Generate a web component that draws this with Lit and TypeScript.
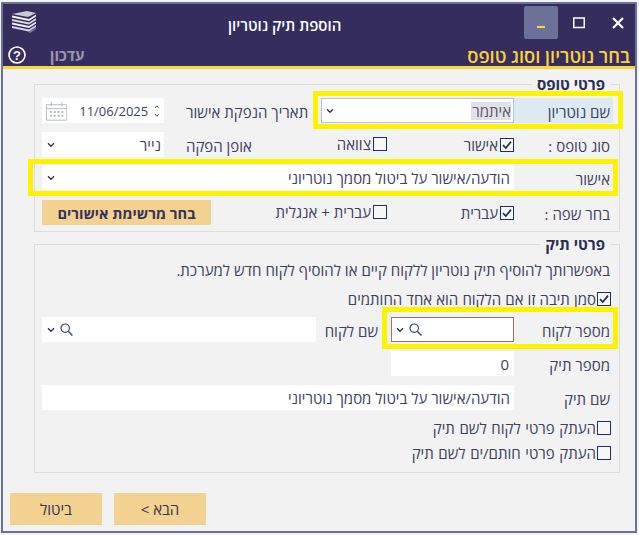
import { LitElement, html, css } from "lit";
import { customElement } from "lit/decorators.js";

const chev = html`<svg class="chev" width="8" height="6" viewBox="0 0 8 6"><path d="M1 1.2 L4 4.2 L7 1.2" fill="none" stroke="#2c3160" stroke-width="1.4"/></svg>`;
const mag = html`<svg class="mag" width="13" height="13" viewBox="0 0 13 13"><circle cx="5.2" cy="5.2" r="4.2" fill="none" stroke="#2f4a78" stroke-width="1.2"/><path d="M8.2 8.2 L12.4 12.4" stroke="#2f4a78" stroke-width="1.4"/></svg>`;

function cb(label: string, checked = false) {
  return html`<label class="cb"><span class="box">${checked
    ? html`<svg width="12" height="12" viewBox="0 0 12 12"><path d="M2 6.2 L4.8 9 L10 2.6" fill="none" stroke="#1f2f5f" stroke-width="1.7"/></svg>`
    : ""}</span><span>${label}</span></label>`;
}

@customElement("app-root")
export class AppRoot extends LitElement {
  static styles = css`
    :host { display: block; width: 639px; height: 535px; background: #f4f4f4; position: relative; overflow: hidden;
      font-family: "Open Sans", "Noto Sans", sans-serif; font-size: 15px; color: #3c3f60; }
    * { box-sizing: border-box; }
    .win { height: 531px; margin: 2px 2px 0 1px; border: 2px solid #6b7199; background: #f2f2f2; display: flex; flex-direction: column; }
    .head { height: 65px; flex: none; background: #352d5e; border-bottom: 3px solid #fdd23f; }
    .toprow { height: 40px; display: flex; align-items: flex-start; }
    .logo { margin: 7px 0 0 9px; flex: none; }
    .title { color: #fff; font-size: 15px; font-weight: 600; margin: 10px 0 0 192px; direction: rtl; line-height: 22px; }
    .ctrls { margin: 2px 0 0 auto; display: flex; }
    .ctrl { height: 33px; display: flex; align-items: center; justify-content: center; }
    .ctrl.min { width: 34px; background: #6b7199; border-radius: 2px; }
    .ctrl.max { width: 42px; }
    .ctrl.close { width: 35px; }
    .subrow { direction: rtl; display: flex; align-items: center; padding: 0 5px 0 5px; height: 22px; }
    .subtitle { color: #fdd23f; font-size: 18.3px; font-weight: 600; white-space: nowrap; }
    .update { color: #9a98ad; font-size: 15px; font-weight: 700; margin: 0 auto 0 24px; }
    .help { display: block; flex: none; }
    .body { direction: rtl; padding: 0 15px 0 31px; flex: none; display: flex; flex-direction: column; }
    fieldset { margin: 0; border: 1px solid #dcdcdc; padding: 0 6px 0 7px; min-width: 0; }
    legend { font-size: 15px; font-weight: 700; color: #2b2d55; padding: 0 5px; margin-right: 3px; line-height: 20px; }
    .f1 { height: 158px; margin-top: 5px; }
    .f2 { height: 239px; margin-top: 2px; }
    .row { display: grid; align-items: center; height: 25px; }
    .r1 { grid-template-columns: 99px 193px 157px 122px; margin-top: 4px; }
    .r2 { grid-template-columns: 99px 127px 65px 158px 122px; margin-top: 9px; }
    .r3 { grid-template-columns: 99px 472px; margin-top: 8px; }
    .r4 { grid-template-columns: 99px 127px 176px 169px; margin-top: 10px; }
    .c1 { grid-template-columns: 99px 123px 75px 274px; margin-top: 12px; }
    .c2 { grid-template-columns: 99px 123px; margin-top: 9px; }
    .c3 { grid-template-columns: 99px 472px; margin-top: 9px; }
    .lbl { padding: 3px 3px 0 0; white-space: nowrap; line-height: 22px; }
    .lbl.sel { background: #deeaf2; height: 25px; }
    .lbl.left { text-align: left; padding: 3px 0 0 22px; }
    .lbl.inner { padding-right: 13px; }
    .field { background: #fff; height: 25px; display: flex; align-items: center; justify-content: space-between; padding: 0 3px 0 5px; white-space: nowrap; line-height: 20px; }
    .field.wide { padding-right: 4px; }
    .field.notary { border: 1px solid #b5c0e6; padding: 0 2px 0 4px; }
    .pick { background: #e1e1e7; color: #5a5a68; height: 18px; line-height: 18px; padding: 0 0 0 1px; }
    .date { direction: ltr; justify-content: flex-start; padding: 0 4px 0 4px; font-size: 13px; }
    .date .val { margin-left: 12px; margin-right: 6px; }
    .spin { display: block; }
    .search { justify-content: flex-end; gap: 5px; }
    .search.picked { border: 1px solid #a5705f; padding-left: 4px; }
    .num { justify-content: flex-start; padding-right: 5px; }
    .para { margin-top: 6px; line-height: 20px; padding-right: 3px; white-space: nowrap; }
    .line { display: block; margin-top: 9px; height: 16px; margin-right: 2px; word-spacing: 0.7px; }
    .line.tight { word-spacing: 0.2px; }
    .btn { background: #f3d191; color: #33335c; display: flex; align-items: center; justify-content: center; white-space: nowrap; }
    .btn.bold { height: 25px; font-weight: 700; font-size: 14.6px; }
    .foot { direction: rtl; display: flex; justify-content: flex-end; gap: 12px; margin: 20px 0 0 7px; }
    .foot .btn { width: 92px; height: 32px; }
    .cb { display: inline-flex; align-items: center; gap: 2px; white-space: nowrap; line-height: 16px; }
    .line .cb { gap: 1px; }
    .box { width: 14px; height: 14px; border: 1px solid #1f2f5f; background: #f7f7f7; display: inline-flex; align-items: center; justify-content: center; flex: none; }
    .hl { position: absolute; border: 5px solid #fff200; pointer-events: none; }
    .h1 { left: 313px; top: 91px; width: 310px; height: 38px; }
    .h2 { left: 28px; top: 159px; width: 590px; height: 37px; }
    .h3 { left: 382px; top: 307px; width: 236px; height: 42px; }
  `;

  render() {
    return html`<div class="win">
      <div class="head">
        <div class="toprow">
          <svg class="logo" width="24" height="22" viewBox="0 0 24 22">
            <path d="M0 3 L15 0 L24 2 L16 6 Z" fill="#c9c9d8"/>
            <path d="M0 4.5 L17 8 L24 3.5 V5.5 L17 10 L0 6.5 Z" fill="#f2f2f6"/>
            <path d="M0 8 L17 11.5 L24 7 V9 L17 13.5 L0 10 Z" fill="#d8d8e4"/>
            <path d="M0 11.5 L17 15 L24 10.5 V12.5 L17 17 L0 13.5 Z" fill="#f2f2f6"/>
            <path d="M0 15 L17 18.5 L24 14 V16 L17 20.5 L0 17 Z" fill="#d8d8e4"/>
            <path d="M15 20 L18 20.5 L24 17 V18 L18 22 Z" fill="#8f8fa8"/>
          </svg>
          <span class="title">הוספת תיק נוטריון</span>
          <div class="ctrls">
            <div class="ctrl min"><svg width="8" height="12" viewBox="0 0 8 12"><path d="M0 10 H8" stroke="#fdd23f" stroke-width="2"/></svg></div>
            <div class="ctrl max"><svg width="12" height="12" viewBox="0 0 12 12"><rect x="0.75" y="1" width="10.5" height="9.5" fill="none" stroke="#fff" stroke-width="1.5"/></svg></div>
            <div class="ctrl close"><svg width="12" height="12" viewBox="0 0 12 12"><path d="M1 1 L11 11 M11 1 L1 11" stroke="#fff" stroke-width="2.2"/></svg></div>
          </div>
        </div>
        <div class="subrow">
          <span class="subtitle">בחר נוטריון וסוג טופס</span>
          <span class="update">עדכון</span>
          <svg class="help" width="18" height="18" viewBox="0 0 18 18"><circle cx="9" cy="9" r="8" fill="none" stroke="#fff" stroke-width="1.6"/><text x="9" y="13.8" text-anchor="middle" fill="#fff" font-size="13" font-weight="700" font-family="Liberation Sans">?</text></svg>
        </div>
      </div>
      <div class="body">
        <fieldset class="f1">
          <legend>פרטי טופס</legend>
          <div class="row r1">
            <div class="lbl sel">שם נוטריון</div>
            <div class="field notary"><span class="pick">איתמר</span>${chev}</div>
            <div class="lbl left">תאריך הנפקת אישור</div>
            <div class="field date">
              <svg width="22" height="20" viewBox="0 0 22 20">
                <path d="M0.5 3.5 H21.5 V19.5 H0.5 Z M0.5 7.5 H21.5" fill="none" stroke="#b4b8c8" stroke-width="1"/>
                <path d="M5.5 0.5 V5 M16.5 0.5 V5" stroke="#b4b8c8" stroke-width="1"/>
                <path d="M4 10 h2 v2 h-2 Z M8 10 h2 v2 h-2 Z M12 10 h2 v2 h-2 Z M16 10 h2 v2 h-2 Z M4 14 h2 v2 h-2 Z M8 14 h2 v2 h-2 Z M12 14 h2 v2 h-2 Z M16 14 h2 v2 h-2 Z" fill="#b4b8c8"/>
              </svg>
              <span class="val">11/06/2025</span>
              <svg class="spin" width="6" height="14" viewBox="0 0 6 14"><path d="M1 4 L3 1.5 L5 4 M1 10 L3 12.5 L5 10" fill="none" stroke="#4a4d6a" stroke-width="1"/></svg>
            </div>
          </div>
          <div class="row r2">
            <div class="lbl">סוג טופס :</div>
            <div>${cb("אישור", true)}</div>
            <div>${cb("צוואה")}</div>
            <div class="lbl left">אופן הפקה</div>
            <div class="field">נייר ${chev}</div>
          </div>
          <div class="row r3">
            <div class="lbl">אישור</div>
            <div class="field wide">הודעה/אישור על ביטול מסמך נוטריוני ${chev}</div>
          </div>
          <div class="row r4">
            <div class="lbl">בחר שפה :</div>
            <div>${cb("עברית", true)}</div>
            <div>${cb("עברית + אנגלית")}</div>
            <div class="btn bold">בחר מרשימת אישורים</div>
          </div>
        </fieldset>
        <fieldset class="f2">
          <legend>פרטי תיק</legend>
          <div class="para">באפשרותך להוסיף תיק נוטריון ללקוח קיים או להוסיף לקוח חדש למערכת.</div>
          <div class="line tight">${cb("סמן תיבה זו אם הלקוח הוא אחד החותמים", true)}</div>
          <div class="row c1">
            <div class="lbl">מספר לקוח</div>
            <div class="field search picked">${mag}${chev}</div>
            <div class="lbl inner">שם לקוח</div>
            <div class="field search">${mag}${chev}</div>
          </div>
          <div class="row c2">
            <div class="lbl">מספר תיק</div>
            <div class="field num">0</div>
          </div>
          <div class="row c3">
            <div class="lbl">שם תיק</div>
            <div class="field wide">הודעה/אישור על ביטול מסמך נוטריוני</div>
          </div>
          <div class="line">${cb("העתק פרטי לקוח לשם תיק")}</div>
          <div class="line">${cb("העתק פרטי חותם/ים לשם תיק")}</div>
        </fieldset>
      </div>
      <div class="foot">
        <div class="btn">הבא ></div>
        <div class="btn">ביטול</div>
      </div>
    </div>
    <div class="hl h1"></div>
    <div class="hl h2"></div>
    <div class="hl h3"></div>`;
  }
}
